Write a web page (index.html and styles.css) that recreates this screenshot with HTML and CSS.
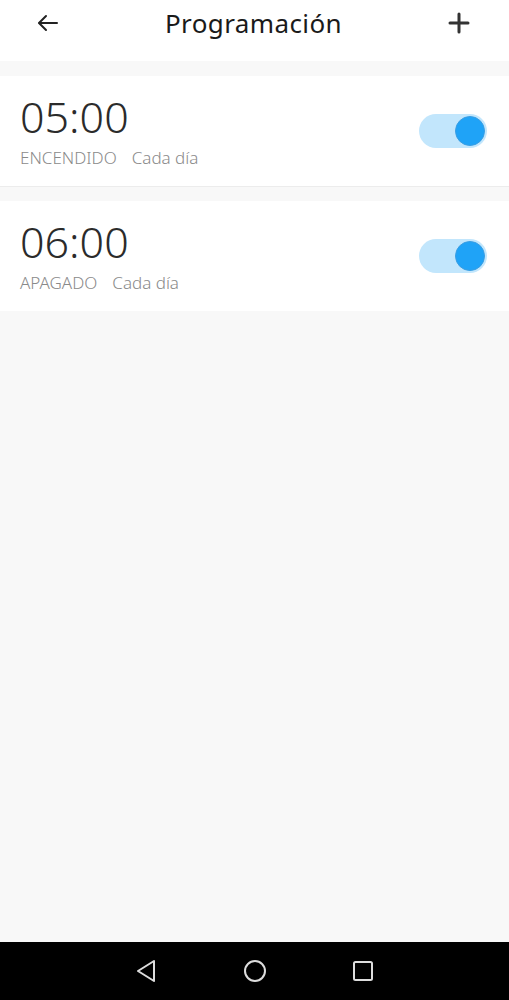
FILE: index.html
```html
<!DOCTYPE html>
<html lang="es">
<head>
    <meta charset="UTF-8">
    <meta name="viewport" content="width=device-width, initial-scale=1.0">
    <title>Programación</title>
    <link rel="stylesheet" href="styles.css">
</head>
<body>

<div class="screen">
    <header class="topbar">
        <button class="icon-btn" aria-label="Atrás">
            <svg width="24" height="24" viewBox="0 0 24 24" fill="none" stroke="#222" stroke-width="2" stroke-linecap="round" stroke-linejoin="round">
                <path d="M21 12H3.5"/>
                <path d="M10 5l-7 7 7 7"/>
            </svg>
        </button>
        <h1 class="title">Programación</h1>
        <button class="icon-btn" aria-label="Añadir">
            <svg width="22" height="22" viewBox="0 0 22 22" fill="none" stroke="#333" stroke-width="3" stroke-linecap="round">
                <path d="M11 2v18"/>
                <path d="M2 11h18"/>
            </svg>
        </button>
    </header>

    <main class="list">
        <div class="item">
            <div class="item-text">
                <div class="time">05:00</div>
                <div class="meta"><span>ENCENDIDO</span><span>Cada día</span></div>
            </div>
            <div class="switch on"><span class="knob"></span></div>
        </div>
        <div class="item">
            <div class="item-text">
                <div class="time">06:00</div>
                <div class="meta"><span>APAGADO</span><span>Cada día</span></div>
            </div>
            <div class="switch on"><span class="knob"></span></div>
        </div>
    </main>

    <nav class="navbar">
        <svg width="24" height="24" viewBox="0 0 24 24" fill="none" stroke="#ddd" stroke-width="2" stroke-linejoin="round">
            <path d="M19 2L3 12l16 10z"/>
        </svg>
        <svg width="24" height="24" viewBox="0 0 24 24" fill="none" stroke="#ddd" stroke-width="2">
            <circle cx="12" cy="12" r="10"/>
        </svg>
        <svg width="24" height="24" viewBox="0 0 24 24" fill="none" stroke="#ddd" stroke-width="2">
            <rect x="3" y="3" width="18" height="18" rx="1.5"/>
        </svg>
    </nav>
</div>

</body>
</html>
```

FILE: styles.css
```css
body {
    margin: 0;
    font-family: "Noto Sans", Roboto, sans-serif;
    background-color: #f8f8f8;
}
.screen {
    display: flex;
    flex-direction: column;
    height: 1000px;
}
.topbar {
    display: flex;
    align-items: center;
    justify-content: space-between;
    height: 61px;
    padding: 0 28px 0 26px;
    background-color: #fff;
}
.icon-btn {
    display: flex;
    align-items: center;
    justify-content: center;
    width: 44px;
    height: 44px;
    margin-top: -16px;
    padding: 0;
    border: none;
    background: none;
    cursor: pointer;
}
.title {
    margin: -16px 0 0;
    font-size: 26px;
    font-weight: 400;
    color: #1a1a1a;
    letter-spacing: 0.4px;
}
.list {
    flex: 1;
    padding-top: 15px;
}
.item {
    display: flex;
    align-items: center;
    justify-content: space-between;
    height: 110px;
    padding: 0 22px 0 20px;
    background-color: #fff;
    border-bottom: 1px solid #ececec;
    margin-bottom: 14px;
}
.item:last-child {
    border-bottom: none;
}
.item-text {
    margin-top: -6px;
}
.time {
    font-size: 43px;
    font-weight: 300;
    line-height: 59px;
    color: #2b2b2b;
}
.meta {
    display: flex;
    gap: 15px;
    font-size: 17px;
    font-weight: 300;
    line-height: 23px;
    color: #8a8a8a;
}
.switch {
    position: relative;
    width: 68px;
    height: 34px;
    border-radius: 17px;
    background-color: #c2e6fc;
}
.knob {
    position: absolute;
    top: 2px;
    right: 2px;
    width: 28px;
    height: 28px;
    border-radius: 50%;
    background-color: #1fa3f7;
    border: 1px solid #3a9ee3;
}
.navbar {
    display: flex;
    align-items: center;
    justify-content: center;
    gap: 84px;
    height: 58px;
    background-color: #000;
}
```
